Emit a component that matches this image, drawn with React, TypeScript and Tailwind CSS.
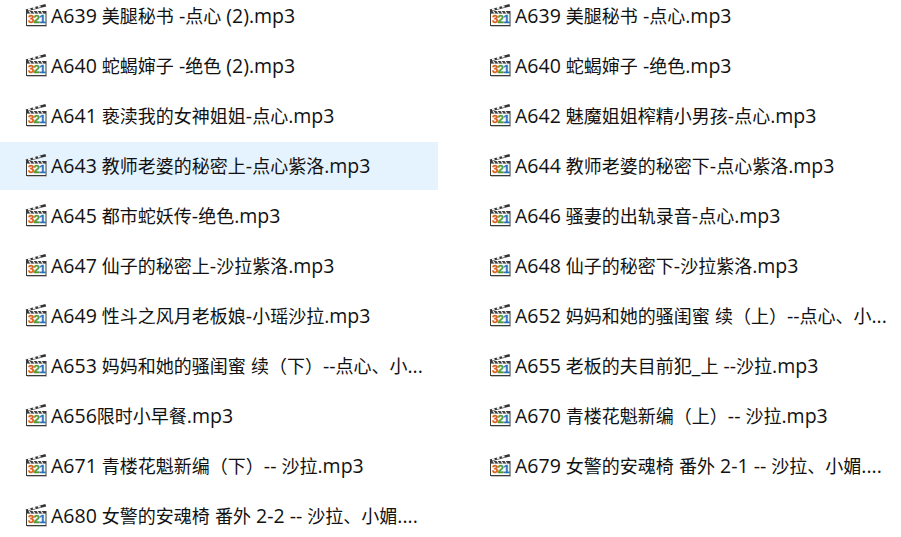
const rows: string[] = [
  "A639 美腿秘书 -点心 (2).mp3",
  "A639 美腿秘书 -点心.mp3",
  "A640 蛇蝎婶子 -绝色 (2).mp3",
  "A640 蛇蝎婶子 -绝色.mp3",
  "A641 亵渎我的女神姐姐-点心.mp3",
  "A642 魅魔姐姐榨精小男孩-点心.mp3",
  "A643 教师老婆的秘密上-点心紫洛.mp3",
  "A644 教师老婆的秘密下-点心紫洛.mp3",
  "A645 都市蛇妖传-绝色.mp3",
  "A646 骚妻的出轨录音-点心.mp3",
  "A647 仙子的秘密上-沙拉紫洛.mp3",
  "A648 仙子的秘密下-沙拉紫洛.mp3",
  "A649 性斗之风月老板娘-小瑶沙拉.mp3",
  "A652 妈妈和她的骚闺蜜 续（上）--点心、小...",
  "A653 妈妈和她的骚闺蜜 续（下）--点心、小...",
  "A655 老板的夫目前犯_上 --沙拉.mp3",
  "A656限时小早餐.mp3",
  "A670 青楼花魁新编（上）-- 沙拉.mp3",
  "A671 青楼花魁新编（下）-- 沙拉.mp3",
  "A679 女警的安魂椅 番外 2-1 -- 沙拉、小媚....",
  "A680 女警的安魂椅 番外 2-2 -- 沙拉、小媚....",
];

function Icon() {
  return (
    <svg width="24" height="24" viewBox="0 0 24 24" className="shrink-0">
      <path d="M0.6 5.4 L20.4 0 L21.2 2.4 L1.4 7.6 Z" fill="#333" />
      <path d="M3 6.4 L2.8 4.6 L5 4 L6 5.8 Z M8 5.2 L7.6 3.3 L10 2.7 L11 4.5 Z M13 3.8 L12.6 2 L15 1.4 L16 3.2 Z" fill="#f2f2f2" />
      <rect x="1.5" y="7.5" width="19.5" height="14" fill="#ffffff" stroke="#3a3a3a" strokeWidth="1" />
      <rect x="2" y="7" width="19" height="2.6" fill="#3a3a3a" />
      <path d="M4 7 L6 9.6 M8 7 L10 9.6 M12 7 L14 9.6 M16 7 L18 9.6" stroke="#eee" strokeWidth="1.2" />
      <rect x="2" y="22" width="20" height="1" fill="#c4c4c4" />
      <text x="2.9" y="19.2" fontFamily="Liberation Sans" fontWeight="700" fontSize="11.5" fill="#d9591f" stroke="#d9591f" strokeWidth="0.3">3</text>
      <text x="8.6" y="19.2" fontFamily="Liberation Sans" fontWeight="700" fontSize="11.5" fill="#4f9a2f" stroke="#4f9a2f" strokeWidth="0.3">2</text>
      <text x="14.3" y="19.2" fontFamily="Liberation Sans" fontWeight="700" fontSize="11.5" fill="#1f73bd" stroke="#1f73bd" strokeWidth="0.3">1</text>
    </svg>
  );
}

function Name({ text }: { text: string }) {
  const parts = text.split(/([\x00-\x7f]+)/).filter(Boolean);
  return (
    <span className="whitespace-nowrap">
      {parts.map((p, i) =>
        /^[\x00-\x7f]/.test(p) ? (
          <span key={i} className="text-[19.5px]">{p}</span>
        ) : (
          <span key={i}>{p}</span>
        ),
      )}
    </span>
  );
}

export default function App() {
  return (
    <div className="h-[537px] w-[901px] overflow-hidden bg-white">
      <div
        className="-mt-[8px] grid w-[902px] grid-cols-[438px_438px] auto-rows-[50px] gap-x-[26px] text-[18px] text-[#111111]"
        style={{ fontFamily: '"Open Sans", "Noto Sans CJK SC", sans-serif' }}
      >
        {rows.map((t, i) => (
          <div key={i} className={`flex h-[48px] items-center gap-[2px] pl-[25px] ${i === 6 ? "bg-[#e5f3ff]" : ""}`}>
            <Icon />
            <Name text={t} />
          </div>
        ))}
      </div>
    </div>
  );
}
